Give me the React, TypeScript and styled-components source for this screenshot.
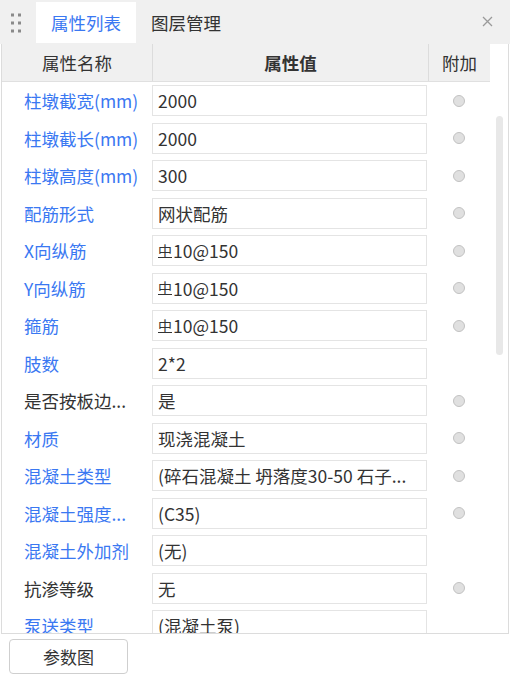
import styled, { createGlobalStyle } from "styled-components";

const GlobalStyle = createGlobalStyle`
  html, body {
    margin: 0;
    padding: 0;
    background: #ffffff;
  }
  body {
    font-family: "Noto Sans CJK SC", "Noto Sans", sans-serif;
    color: #333;
  }
`;

type Prop = {
  name: string;
  value: string;
  link?: boolean;
  radio?: boolean;
  rebar?: boolean;
};

const props: Prop[] = [
  { name: "柱墩截宽(mm)", value: "2000", link: true, radio: true },
  { name: "柱墩截长(mm)", value: "2000", link: true, radio: true },
  { name: "柱墩高度(mm)", value: "300", link: true, radio: true },
  { name: "配筋形式", value: "网状配筋", link: true, radio: true },
  { name: "X向纵筋", value: "10@150", link: true, radio: true, rebar: true },
  { name: "Y向纵筋", value: "10@150", link: true, radio: true, rebar: true },
  { name: "箍筋", value: "10@150", link: true, radio: true, rebar: true },
  { name: "肢数", value: "2*2", link: true },
  { name: "是否按板边...", value: "是", radio: true },
  { name: "材质", value: "现浇混凝土", link: true, radio: true },
  { name: "混凝土类型", value: "(碎石混凝土 坍落度30-50 石子...", link: true, radio: true },
  { name: "混凝土强度...", value: "(C35)", link: true, radio: true },
  { name: "混凝土外加剂", value: "(无)", link: true },
  { name: "抗渗等级", value: "无", radio: true },
  { name: "泵送类型", value: "(混凝土泵)", link: true },
];

const Panel = styled.div`
  width: 510px;
  height: 678px;
  display: flex;
  flex-direction: column;
  overflow: hidden;
`;

const TabBar = styled.div`
  height: 44px;
  flex: none;
  display: flex;
  align-items: stretch;
  background: #f0f0f0;
  padding-top: 2px;
  box-sizing: border-box;
`;

const Grip = styled.div`
  width: 36px;
  display: flex;
  align-items: center;
  justify-content: center;
  padding-right: 5px;
  box-sizing: border-box;
`;

const Tab = styled.div<{ $active?: boolean }>`
  padding: 0 15px;
  display: flex;
  align-items: center;
  font-size: 17.5px;
  background: ${(p) => (p.$active ? "#ffffff" : "transparent")};
  color: ${(p) => (p.$active ? "#3a78f2" : "#333")};
  margin-bottom: 1px;
`;

const Close = styled.div`
  margin-left: auto;
  width: 44px;
  display: flex;
  align-items: center;
  justify-content: center;
  padding-right: 2px;
  padding-bottom: 3px;
  box-sizing: border-box;
`;

const Body = styled.div`
  height: 589px;
  flex: none;
  margin: 0 1px;
  border-left: 1px solid #dcdcdc;
  border-right: 1px solid #dcdcdc;
  border-bottom: 1px solid #dcdcdc;
  display: flex;
  overflow: hidden;
`;

const Table = styled.div`
  width: 488px;
  flex: none;
  display: flex;
  flex-direction: column;
`;

const Columns = "150px 276px 62px";

const HeaderRow = styled.div`
  display: grid;
  grid-template-columns: ${Columns};
  height: 38px;
  flex: none;
  background: #f0f0f0;
  border-bottom: 1px solid #e0e0e0;
  box-sizing: border-box;
  font-size: 17.5px;
`;

const HeadCell = styled.div<{ $bold?: boolean }>`
  display: flex;
  align-items: center;
  justify-content: center;
  border-left: 1px solid #dcdcdc;
  font-weight: ${(p) => (p.$bold ? 700 : 400)};
  color: #333;
  &:first-child {
    border-left: none;
  }
`;

const Row = styled.div`
  display: grid;
  grid-template-columns: ${Columns};
  height: 37.5px;
  flex: none;
  align-items: center;
  font-size: 17.5px;
`;

const Label = styled.div<{ $link?: boolean }>`
  padding-left: 22px;
  color: ${(p) => (p.$link ? "#3a78f2" : "#333")};
  white-space: nowrap;
  overflow: hidden;
`;

const ValueBox = styled.div`
  height: 31px;
  margin-right: 1px;
  border: 1.5px solid #e4e4e4;
  box-sizing: border-box;
  display: flex;
  align-items: center;
  padding: 0 5px;
  color: #333;
  white-space: nowrap;
  overflow: hidden;
`;

const Rebar = styled.span`
  display: inline-block;
  font-size: 14px;
  line-height: 13px;
  border-bottom: 1.5px solid #333;
  margin-right: 1px;
  vertical-align: 4px;
`;

const RadioCell = styled.div`
  display: flex;
  justify-content: center;
`;

const Radio = styled.span`
  width: 12px;
  height: 12px;
  border-radius: 50%;
  background: #e0e0e0;
  border: 1px solid #c2c2c2;
  box-sizing: border-box;
`;

const Gutter = styled.div`
  flex: 1;
  display: flex;
  justify-content: center;
  padding-left: 1px;
`;

const Thumb = styled.div`
  width: 7px;
  height: 239px;
  margin-top: 72px;
  border-radius: 4px;
  background: #e8e8e8;
`;

const Footer = styled.div`
  flex: 1;
  padding: 5px 9px;
`;

const Button = styled.button`
  width: 119px;
  height: 35px;
  border: 1px solid #cfcfcf;
  border-radius: 4px;
  background: #ffffff;
  font-family: "Noto Sans CJK SC", "Noto Sans", sans-serif;
  font-size: 17px;
  color: #333;
  padding: 0;
`;

function GripIcon() {
  return (
    <svg width="10" height="20" viewBox="0 0 10 20">
      {[2, 10, 18].map((y) =>
        [1.5, 8.5].map((x) => (
          <rect key={`${x}-${y}`} x={x - 1.5} y={y - 1.5} width="3" height="3" fill="#8a8a8a" />
        ))
      )}
    </svg>
  );
}

function CloseIcon() {
  return (
    <svg width="11" height="11" viewBox="0 0 11 11">
      <path d="M1 1L10 10M10 1L1 10" stroke="#9a9a9a" strokeWidth="1.3" />
    </svg>
  );
}

export default function App() {
  return (
    <>
      <GlobalStyle />
      <Panel>
        <TabBar>
          <Grip>
            <GripIcon />
          </Grip>
          <Tab $active>属性列表</Tab>
          <Tab>图层管理</Tab>
          <Close>
            <CloseIcon />
          </Close>
        </TabBar>
        <Body>
          <Table>
            <HeaderRow>
              <HeadCell>属性名称</HeadCell>
              <HeadCell $bold>属性值</HeadCell>
              <HeadCell>附加</HeadCell>
            </HeaderRow>
            {props.map((p) => (
              <Row key={p.name}>
                <Label $link={p.link}>{p.name}</Label>
                <ValueBox>
                  {p.rebar && <Rebar>中</Rebar>}
                  {p.value}
                </ValueBox>
                <RadioCell>{p.radio && <Radio />}</RadioCell>
              </Row>
            ))}
          </Table>
          <Gutter>
            <Thumb />
          </Gutter>
        </Body>
        <Footer>
          <Button>参数图</Button>
        </Footer>
      </Panel>
    </>
  );
}
